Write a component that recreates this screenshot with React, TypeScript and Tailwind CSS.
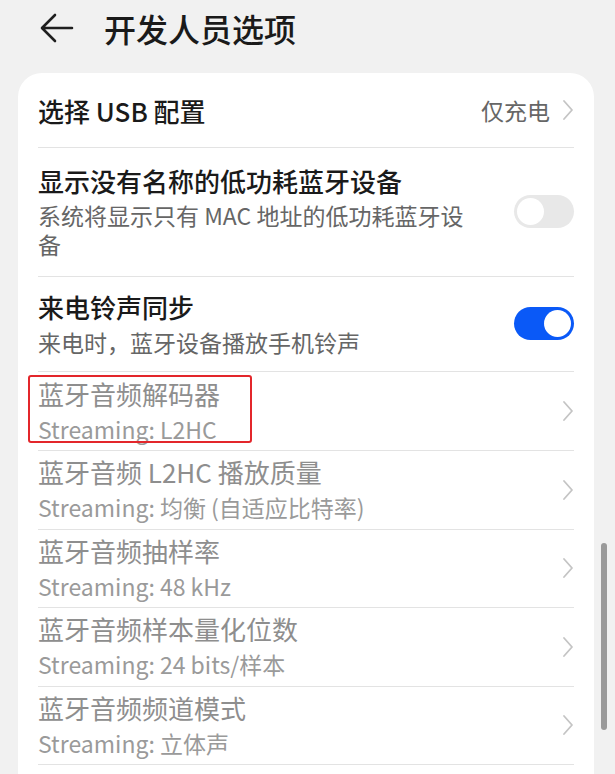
import React from 'react';

const font = { fontFamily: '"Noto Sans CJK SC", "Noto Sans", sans-serif' };

function Chevron() {
  return (
    <svg width="12" height="24" viewBox="0 0 12 24" className="shrink-0">
      <path d="M2 3 L10 12 L2 21" fill="none" stroke="#c4c4c4" strokeWidth="1.8" strokeLinecap="round" strokeLinejoin="round" />
    </svg>
  );
}

function Toggle({ on }: { on: boolean }) {
  return on ? (
    <div className="w-[60px] h-[33px] rounded-full bg-[#0a59f7] flex items-center justify-end pr-[3px] shrink-0">
      <div className="w-[27px] h-[27px] rounded-full bg-white" />
    </div>
  ) : (
    <div className="w-[60px] h-[33px] rounded-full bg-[#e8e8e8] flex items-center pl-[3px] shrink-0">
      <div className="w-[27px] h-[27px] rounded-full bg-white" />
    </div>
  );
}

type Item = { title: string; sub: string };

const greyItems: Item[] = [
  { title: '蓝牙音频 L2HC 播放质量', sub: 'Streaming: 均衡 (自适应比特率)' },
  { title: '蓝牙音频抽样率', sub: 'Streaming: 48 kHz' },
  { title: '蓝牙音频样本量化位数', sub: 'Streaming: 24 bits/样本' },
  { title: '蓝牙音频频道模式', sub: 'Streaming: 立体声' },
];

function GreyRow({ item }: { item: Item }) {
  return (
    <div className="flex items-center border-b border-[#e3e3e3] h-[78.5px]">
      <div className="flex-1 min-w-0 pb-[2px]">
        <div className="text-[26px] leading-[34px] text-[#8e8e8e]">{item.title}</div>
        <div className="text-[23px] leading-[30px] mt-[3px] text-[#9a9a9a]">{item.sub}</div>
      </div>
      <Chevron />
    </div>
  );
}

export default function App() {
  return (
    <div className="relative h-[774px] w-[615px] overflow-hidden bg-[#f1f1f1]" style={font}>
      {/* Header */}
      <div className="flex items-center h-[55px] pl-[40px]">
        <svg width="34" height="30" viewBox="0 0 34 30" className="shrink-0">
          <path d="M32 15 H3 M15 2 L2 15 L15 28" fill="none" stroke="#1f1f1f" strokeWidth="2.6" strokeLinecap="round" strokeLinejoin="round" />
        </svg>
        <div className="ml-[30px] text-[32px] leading-[40px] font-medium text-[#1a1a1a]">开发人员选项</div>
      </div>

      {/* Card */}
      <div className="mt-[18px] ml-[18px] w-[576px] bg-white rounded-t-[24px] px-[20px] pb-[20px]">
        <div className="flex items-center border-b border-[#e3e3e3] h-[75px]">
          <div className="flex-1 text-[26px] text-[#1a1a1a] font-medium">选择 USB 配置</div>
          <div className="text-[23px] text-[#666666] mr-[12px]">仅充电</div>
          <Chevron />
        </div>

        <div className="flex items-center border-b border-[#e3e3e3] pt-[16px] pb-[17px]">
          <div className="flex-1 min-w-0 pr-[30px]">
            <div className="text-[26px] leading-[34px] text-[#1a1a1a] font-medium">显示没有名称的低功耗蓝牙设备</div>
            <div className="text-[23px] leading-[29px] mt-[3px] text-[#666666]">系统将显示只有 MAC 地址的低功耗蓝牙设备</div>
          </div>
          <Toggle on={false} />
        </div>

        <div className="flex items-center border-b border-[#e3e3e3] pt-[13px] pb-[14px]">
          <div className="flex-1 min-w-0">
            <div className="text-[26px] leading-[34px] text-[#1a1a1a] font-medium">来电铃声同步</div>
            <div className="text-[23px] leading-[29px] mt-[4px] text-[#666666]">来电时，蓝牙设备播放手机铃声</div>
          </div>
          <Toggle on={true} />
        </div>

        <div className="flex items-center border-b border-[#e3e3e3] h-[79px]">
          <div className="flex-1 min-w-0 pb-[2px]">
            <div className="relative inline-block">
              <div className="text-[26px] leading-[34px] text-[#8e8e8e]">蓝牙音频解码器</div>
              <div className="text-[23px] leading-[30px] mt-[3px] text-[#9a9a9a]">Streaming: L2HC</div>
              <div className="absolute left-[-10px] top-[-2px] w-[224px] h-[68px] border-2 border-[#e3262b] rounded-[3px]" />
            </div>
          </div>
          <Chevron />
        </div>

        {greyItems.map((it) => (
          <GreyRow key={it.title} item={it} />
        ))}
      </div>

      {/* Scrollbar */}
      <div className="absolute left-[601px] top-[543px] w-[6px] h-[187px] rounded-full bg-[#9a9a9a]" />
    </div>
  );
}
